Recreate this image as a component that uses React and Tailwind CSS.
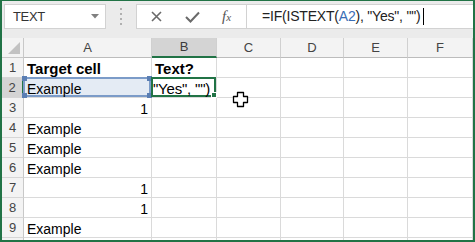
import React from "react";

const cols = [
  { key: "A", w: "w-[128px]" },
  { key: "B", w: "w-[65px]" },
  { key: "C", w: "w-[64px]" },
  { key: "D", w: "w-[63px]" },
  { key: "E", w: "w-[64px]" },
  { key: "F", w: "w-[65px]" },
];

const rows = [
  ["Target cell", "Text?"],
  ["Example", ""],
  [1, ""],
  ["Example", ""],
  ["Example", ""],
  ["Example", ""],
  [1, ""],
  [1, ""],
  ["Example", ""],
];

const Handle = ({ className }) => (
  <span className={`absolute w-[5px] h-[5px] ${className}`} />
);

const Cell = ({ col, row, value }) => {
  const isNum = typeof value === "number";
  const bold = row === 1;
  let content = null;

  if (col.key === "A" && row === 2) {
    content = (
      <div className="absolute -left-px -top-px right-0 bottom-0 border-2 border-[#7b9bc8] bg-[#e4ebf4]">
        <span className="absolute left-[2px] top-[2px] text-[14px] leading-[16px]">{value}</span>
        <Handle className="-left-[3px] -top-[3px] bg-[#5a7eb3]" />
        <Handle className="-right-[3px] -top-[3px] bg-[#5a7eb3]" />
        <Handle className="-left-[3px] -bottom-[3px] bg-[#5a7eb3]" />
        <Handle className="-right-[3px] -bottom-[3px] bg-[#5a7eb3]" />
      </div>
    );
  } else if (col.key === "B" && row === 2) {
    content = (
      <div className="absolute -left-px -top-px right-0 bottom-0 border-2 border-[#217346] bg-white z-10">
        <span className="absolute left-0 top-[1px] text-[15px] leading-[17px] whitespace-nowrap tracking-[-0.2px]">"Yes", "")</span>
        <Handle className="-right-[3px] -bottom-[3px] bg-[#217346] border border-white w-[6px] h-[6px]" />
      </div>
    );
  } else if (value !== "") {
    content = (
      <span
        className={`absolute top-[3px] leading-[16px] whitespace-nowrap ${
          isNum ? "right-[3px]" : "left-[3px]"
        } ${bold ? "font-bold text-[15px] top-[2px]" : "text-[14px]"}`}
      >
        {value}
      </span>
    );
  }

  return (
    <div className={`relative h-full ${col.w} border-r border-b border-[#dadada] shrink-0`}>
      {content}
    </div>
  );
};

const Cursor = () => (
  <svg className="absolute left-[230px] top-[90px] z-20" width="17" height="17" viewBox="0 0 17 17">
    <path
      d="M5.5 1.5h6v4h4v6h-4v4h-6v-4h-4v-6h4z"
      fill="#fff"
      stroke="#000"
      strokeWidth="1.3"
      strokeLinejoin="round"
    />
  </svg>
);

export default function App() {
  return (
    <div
      className="relative w-[475px] h-[242px] overflow-hidden bg-white border-2 border-t border-[#217346] text-[#000] flex flex-col"
      style={{ fontFamily: '"Liberation Sans", Arial, sans-serif' }}
    >
      {/* Formula toolbar */}
      <div className="h-[37px] shrink-0 bg-[#ebebeb] flex items-start pt-[3px]">
        <div className="ml-[2px] w-[102px] h-[25px] bg-white border border-[#d2d2d2] flex items-center pl-[8px] pr-[6px]">
          <span className="text-[13px] text-[#333] tracking-tight">TEXT</span>
          <svg className="ml-auto" width="8" height="5" viewBox="0 0 8 5">
            <path d="M0 0h8L4 4.5z" fill="#808080" />
          </svg>
        </div>
        <div className="w-[30px] h-[25px] flex flex-col items-center justify-center gap-[3px]">
          <span className="w-[2px] h-[2px] bg-[#b0b0b0]" />
          <span className="w-[2px] h-[2px] bg-[#b0b0b0]" />
          <span className="w-[2px] h-[2px] bg-[#b0b0b0]" />
          <span className="w-[2px] h-[2px] bg-[#b0b0b0]" />
        </div>
        <div className="flex-1 h-[25px] bg-white border border-[#d2d2d2] border-r-0 flex items-center">
          <div className="w-[109px] h-full flex items-center">
            <svg className="ml-[14px]" width="11" height="11" viewBox="0 0 11 11">
              <path d="M1 1l9 9M10 1l-9 9" stroke="#6a6a6a" strokeWidth="1.6" />
            </svg>
            <svg className="ml-[23px]" width="15" height="12" viewBox="0 0 15 12">
              <path d="M1 6l4.5 4.5L14 1.5" fill="none" stroke="#6a6a6a" strokeWidth="2" />
            </svg>
            <span
              className="ml-[22px] italic text-[15px] text-[#555]"
              style={{ fontFamily: '"Liberation Serif", "DejaVu Serif", serif' }}
            >
              f<span className="text-[11px]">x</span>
            </span>
          </div>
          <div className="h-full border-l border-[#d2d2d2] flex items-center pl-[15px]">
            <span className="text-[14px] text-[#222] whitespace-nowrap tracking-[-0.2px]">
              =IF(ISTEXT(<span className="text-[#3a6db5]">A2</span>), "Yes", "")
            </span>
            <span className="ml-[2px] w-px h-[17px] bg-black" />
          </div>
        </div>
      </div>

      {/* Column headers */}
      <div className="h-[20px] shrink-0 flex bg-[#f3f3f3] text-[13px] text-[#444]">
        <div className="relative w-[22px] h-full border-r border-b border-[#c8c8c8] shrink-0">
          <svg className="absolute right-[3px] bottom-[3px]" width="12" height="12" viewBox="0 0 12 12">
            <path d="M12 0v12H0z" fill="#c2c2c2" />
          </svg>
        </div>
        {cols.map((c) => (
          <div
            key={c.key}
            className={`${c.w} h-full shrink-0 flex items-center justify-center border-r border-[#d0d0d0] ${
              c.key === "B" ? "bg-[#d4d4d4] border-b-2 border-b-[#217346]" : "border-b border-b-[#bcbcbc]"
            }`}
          >
            <span className={c.key === "B" ? "text-[#3c3c3c]" : ""}>{c.key}</span>
          </div>
        ))}
      </div>

      {/* Rows */}
      {rows.map((r, i) => {
        const n = i + 1;
        return (
          <div key={n} className="h-[20px] shrink-0 flex">
            <div
              className={`w-[22px] h-full shrink-0 flex items-center justify-center text-[13px] text-[#444] border-b border-[#d6d6d6] ${
                n === 2 ? "bg-[#d4d4d4] border-r-2 border-r-[#217346]" : "bg-[#f3f3f3] border-r border-r-[#c8c8c8]"
              }`}
            >
              {n}
            </div>
            {cols.map((c, ci) => (
              <Cell key={c.key} col={c} row={n} value={ci < 2 ? r[ci] : ""} />
            ))}
          </div>
        );
      })}

      {/* partial row 10 */}
      <div className="flex-1 flex">
        <div className="w-[22px] shrink-0 bg-[#f3f3f3] border-r border-[#c8c8c8]" />
        {cols.map((c) => (
          <div key={c.key} className={`${c.w} shrink-0 border-r border-[#dadada]`} />
        ))}
      </div>

      <Cursor />
    </div>
  );
}
